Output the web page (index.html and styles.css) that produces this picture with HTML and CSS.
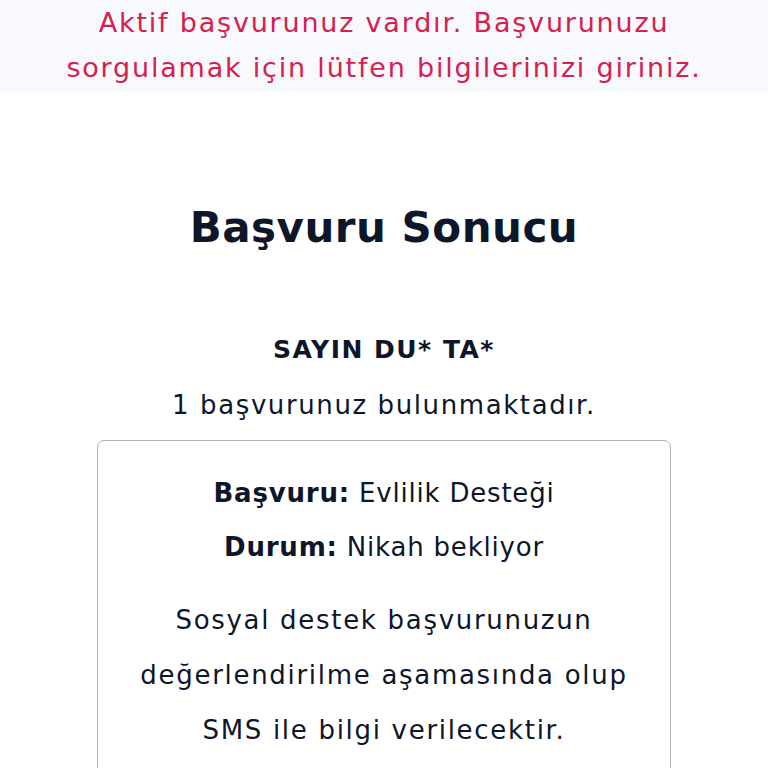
FILE: index.html
```html
<!DOCTYPE html>
<html lang="tr">
<head>
<meta charset="utf-8">
<link rel="stylesheet" href="styles.css">
</head>
<body>
<div class="banner">
  <p class="banner-text">Aktif başvurunuz vardır. Başvurunuzu<br>sorgulamak için lütfen bilgilerinizi giriniz.</p>
</div>
<main class="result">
  <h1 class="title">Başvuru Sonucu</h1>
  <p class="name">SAYIN DU* TA*</p>
  <p class="count">1 başvurunuz bulunmaktadır.</p>
  <div class="card">
    <p class="row"><strong>Başvuru:</strong> Evlilik Desteği</p>
    <p class="row"><strong>Durum:</strong> Nikah bekliyor</p>
    <p class="desc">Sosyal destek başvurunuzun<br>değerlendirilme aşamasında olup<br>SMS ile bilgi verilecektir.</p>
  </div>
</main>
</body>
</html>
```
FILE: styles.css
```css
html, body {
  margin: 0;
  padding: 0;
  background: #ffffff;
  font-family: "DejaVu Sans", sans-serif;
  color: #0e1629;
}
.banner {
  background: #f8f9fc;
  height: 92px;
}
.banner-text {
  margin: 0;
  text-align: center;
  color: #d6204f;
  font-size: 27px;
  line-height: 45px;
  letter-spacing: 1.8px;
}
.result {
  display: flex;
  flex-direction: column;
  align-items: center;
  text-align: center;
}
.title {
  margin: 108px 0 0;
  font-size: 42px;
  line-height: 56px;
  font-weight: 700;
  letter-spacing: 0.5px;
}
.name {
  margin: 79px 0 0;
  font-size: 25px;
  line-height: 30px;
  font-weight: 700;
  letter-spacing: 1.5px;
}
.count {
  margin: 24px 0 0;
  font-size: 26px;
  line-height: 32px;
  letter-spacing: 1.6px;
}
.card {
  box-sizing: border-box;
  width: 574px;
  margin-top: 19px;
  border: 1.5px solid #b4b4b8;
  border-radius: 7px;
  padding: 36px 10px 20px;
}
.row {
  margin: 0 0 22px;
  font-size: 26px;
  line-height: 32px;
  letter-spacing: 0.8px;
}
.row strong { font-weight: 700; }
.desc {
  margin: 30px 0 0;
  font-size: 26px;
  line-height: 55px;
  letter-spacing: 1.7px;
}
```
